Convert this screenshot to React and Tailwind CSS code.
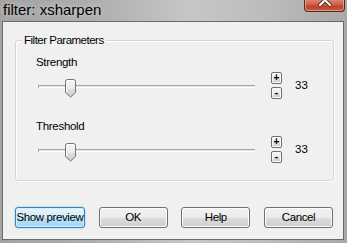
import React from 'react';

function Slider({ pos }) {
  return (
    <svg width="217" height="27" className="block shrink-0">
      <defs>
        <linearGradient id="thumb" x1="0" y1="0" x2="0" y2="1">
          <stop offset="0" stopColor="#f6f6f6" />
          <stop offset="0.5" stopColor="#ececec" />
          <stop offset="0.55" stopColor="#dedede" />
          <stop offset="1" stopColor="#d0d0d0" />
        </linearGradient>
      </defs>
      {/* track */}
      <rect x="0" y="13" width="217" height="1" fill="#a7a7a7" />
      <rect x="0" y="14" width="217" height="1" fill="#e4e4e4" />
      <rect x="0" y="15" width="217" height="1" fill="#ffffff" />
      <rect x="0" y="13" width="1" height="3" fill="#a7a7a7" />
      {/* thumb */}
      <path
        d={`M${pos + 0.5} 9.5 Q${pos + 0.5} 7.5 ${pos + 2.5} 7.5 L${pos + 8.5} 7.5 Q${pos + 10.5} 7.5 ${pos + 10.5} 9.5 L${pos + 10.5} 20.5 L${pos + 5.5} 25 L${pos + 0.5} 20.5 Z`}
        fill="url(#thumb)"
        stroke="#6f6f6f"
        strokeWidth="1"
      />
      <path
        d={`M${pos + 1.5} 9.5 L${pos + 1.5} 20 M${pos + 2.5} 8.5 L${pos + 8.5} 8.5`}
        stroke="#ffffff"
        strokeWidth="1"
        fill="none"
      />
    </svg>
  );
}

function Spin({ label, extra }) {
  return (
    <div
      className={`w-[11px] h-[12px] flex items-center justify-center rounded-[2px] border border-[#707070] bg-[linear-gradient(#f4f4f4_0%,#ebebeb_50%,#dcdcdc_50%,#cfcfcf_100%)] shadow-[inset_0_0_0_1px_#fbfbfb] text-black text-[10px] font-bold leading-none ${extra}`}
    >
      {label}
    </div>
  );
}

function Param({ name, value, gapTop }) {
  return (
    <div className={gapTop}>
      <div className="pl-[20px] text-[11.5px] leading-[13px] tracking-[-0.3px] text-black">{name}</div>
      <div className="flex items-center mt-[3px] pl-[22px]">
        <Slider pos={27} />
        <div className="flex flex-col gap-[3px] ml-[16px]">
          <Spin label="+" extra="" />
          <Spin label="-" extra="pb-[1px]" />
        </div>
        <span className="ml-[13px] text-[11.5px] leading-[13px] text-black">{value}</span>
      </div>
    </div>
  );
}

function Button({ children, primary, w }) {
  return (
    <button
      className={`${w} h-[21px] rounded-[3px] border text-[11.5px] leading-none tracking-[-0.4px] text-black flex items-center justify-center ${
        primary
          ? 'border-[#3c7fb1] bg-[linear-gradient(#e5f4fc_0%,#d3edfb_50%,#b6e0f8_50%,#a6d7f4_100%)] shadow-[inset_0_0_0_1px_#d2efff,0_0_2px_#6cc5f5]'
          : 'border-[#707070] bg-[linear-gradient(#f2f2f2_0%,#ebebeb_50%,#dddddd_50%,#cfcfcf_100%)] shadow-[inset_0_0_0_1px_#fcfcfc]'
      }`}
    >
      {children}
    </button>
  );
}

export default function App() {
  return (
    <div className="w-[347px] h-[243px] flex flex-col bg-[linear-gradient(90deg,#a3a3a3_0%,#acacac_25%,#c6c6c6_55%,#bdbdbd_75%,#a8a8a8_100%)] font-['Liberation_Sans',Arial,sans-serif] overflow-hidden">
      {/* Title bar */}
      <div className="h-[21px] shrink-0 flex items-start justify-between">
        <span className="ml-[3px] mt-[1px] text-[15px] leading-[17px] text-black [text-shadow:0_0_6px_rgba(255,255,255,0.7)]">
          filter: xsharpen
        </span>
        <div className="mr-[2px] w-[41px] h-[13px] -mt-[1px] rounded-b-[4px] border border-t-0 border-[#4f2a22] bg-[linear-gradient(#dc8b78_0%,#cf5f47_45%,#c0442b_60%,#c85a3e_100%)] shadow-[inset_0_0_0_1px_rgba(255,210,200,0.5)] flex justify-center overflow-hidden">
          <svg width="14" height="12" className="block">
            <path d="M2 -4 L12 6 M12 -4 L2 6" stroke="#5b2a20" strokeWidth="4" strokeLinecap="square" />
            <path d="M2 -4 L12 6 M12 -4 L2 6" stroke="#ffffff" strokeWidth="2" strokeLinecap="square" />
          </svg>
        </div>
      </div>

      {/* Client area */}
      <div className="flex-1 ml-[2px] mr-[3px] mb-[3px] border border-[#6a6a6a] bg-[#f0f0f0] flex flex-col">
        <div className="relative mt-[18px] ml-[12px] w-[319px] h-[141px] border border-[#d5d5d5] rounded-[3px] shadow-[1px_1px_0_#ffffff,inset_1px_1px_0_#ffffff]">
          <span className="absolute left-[6px] -top-[7px] px-[2px] bg-[#f0f0f0] text-[11.5px] leading-[13px] tracking-[-0.5px] text-black">
            Filter Parameters
          </span>
          <div className="pt-[15px]">
            <Param name="Strength" value="33" gapTop="" />
            <Param name="Threshold" value="33" gapTop="mt-[21px]" />
          </div>
        </div>

        <div className="mt-[26px] ml-[12px] w-[318px] flex justify-between">
          <Button primary w="w-[70px]">Show preview</Button>
          <Button w="w-[69px]">OK</Button>
          <Button w="w-[69px]">Help</Button>
          <Button w="w-[69px]">Cancel</Button>
        </div>
      </div>
    </div>
  );
}
